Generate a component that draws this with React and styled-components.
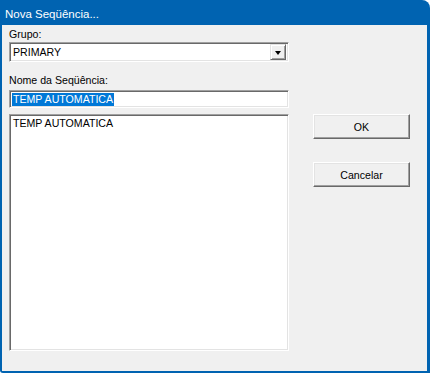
import React from "react";
import styled, { createGlobalStyle } from "styled-components";

const GlobalStyle = createGlobalStyle`
  body {
    margin: 0;
    background: #ffffff;
  }
`;

const Window = styled.div`
  width: 430px;
  height: 373px;
  box-sizing: border-box;
  display: flex;
  flex-direction: column;
  background: #0063b1;
  border-top-right-radius: 8px;
  border-bottom-left-radius: 3px;
  padding: 0 3px 2px 2px;
  font-family: "Liberation Sans", Arial, sans-serif;
  font-size: 10.6px;
  color: #000000;
`;

const TitleBar = styled.div`
  height: 25px;
  flex-shrink: 0;
  display: flex;
  align-items: center;
  padding: 2px 0 0 3px;
  box-sizing: border-box;
  color: #ffffff;
  font-size: 11.5px;
`;

const Client = styled.div`
  flex: 1;
  display: flex;
  background: #f0f0f0;
  padding: 2px 0 20px 7px;
`;

const LeftColumn = styled.div`
  width: 280px;
  display: flex;
  flex-direction: column;
`;

const RightColumn = styled.div`
  display: flex;
  flex-direction: column;
  gap: 23px;
  margin-left: 24px;
  padding-top: 87px;
`;

const Label = styled.div`
  height: 15px;
  line-height: 15px;
  margin-top: ${(props) => (props.$spaced ? "11px" : "0")};
`;

const sunken = `
  box-sizing: border-box;
  background: #ffffff;
  border: 1px solid;
  border-color: #a0a0a0 #ffffff #ffffff #a0a0a0;
  box-shadow: inset 1px 1px #696969, inset -1px -1px #e3e3e3;
`;

const Combo = styled.div`
  ${sunken}
  height: 20px;
  display: flex;
  align-items: center;
  justify-content: space-between;
  padding: 0 2px 0 3px;
  line-height: 13px;
`;

const DropButton = styled.div`
  width: 16px;
  height: 16px;
  box-sizing: border-box;
  background: #f0f0f0;
  border: 1px solid;
  border-color: #e3e3e3 #696969 #696969 #e3e3e3;
  box-shadow: inset 1px 1px #ffffff, inset -1px -1px #a0a0a0;
  display: flex;
  align-items: center;
  justify-content: center;

  &::after {
    content: "";
    width: 0;
    height: 0;
    margin-top: 1px;
    border-left: 3.5px solid transparent;
    border-right: 3.5px solid transparent;
    border-top: 4px solid #000000;
  }
`;

const TextInput = styled.div`
  ${sunken}
  height: 18px;
  margin-top: 2px;
  padding: 2px 0 0 2px;
`;

const Selected = styled.span`
  display: inline-block;
  height: 13px;
  line-height: 13px;
  padding: 0 1px;
  background: #0078d7;
  color: #ffffff;
`;

const ListBox = styled.div`
  ${sunken}
  flex: 1;
  margin-top: 6px;
  padding: 2px 0 0 3px;
  line-height: 13px;
`;

const Button = styled.div`
  width: 97px;
  height: 25px;
  box-sizing: border-box;
  background: #f0f0f0;
  border: 1px solid;
  border-color: #ffffff #696969 #696969 #ffffff;
  box-shadow: inset -1px -1px #a0a0a0, inset 1px 1px #e3e3e3;
  display: flex;
  align-items: center;
  justify-content: center;
`;

const App = () => {
  return (
    <>
      <GlobalStyle />
      <Window>
        <TitleBar>Nova Seqüência...</TitleBar>
        <Client>
          <LeftColumn>
            <Label>Grupo:</Label>
            <Combo>
              <span>PRIMARY</span>
              <DropButton />
            </Combo>
            <Label $spaced>Nome da Seqüência:</Label>
            <TextInput>
              <Selected>TEMP AUTOMATICA</Selected>
            </TextInput>
            <ListBox>TEMP AUTOMATICA</ListBox>
          </LeftColumn>
          <RightColumn>
            <Button>OK</Button>
            <Button>Cancelar</Button>
          </RightColumn>
        </Client>
      </Window>
    </>
  );
};

export default App;
